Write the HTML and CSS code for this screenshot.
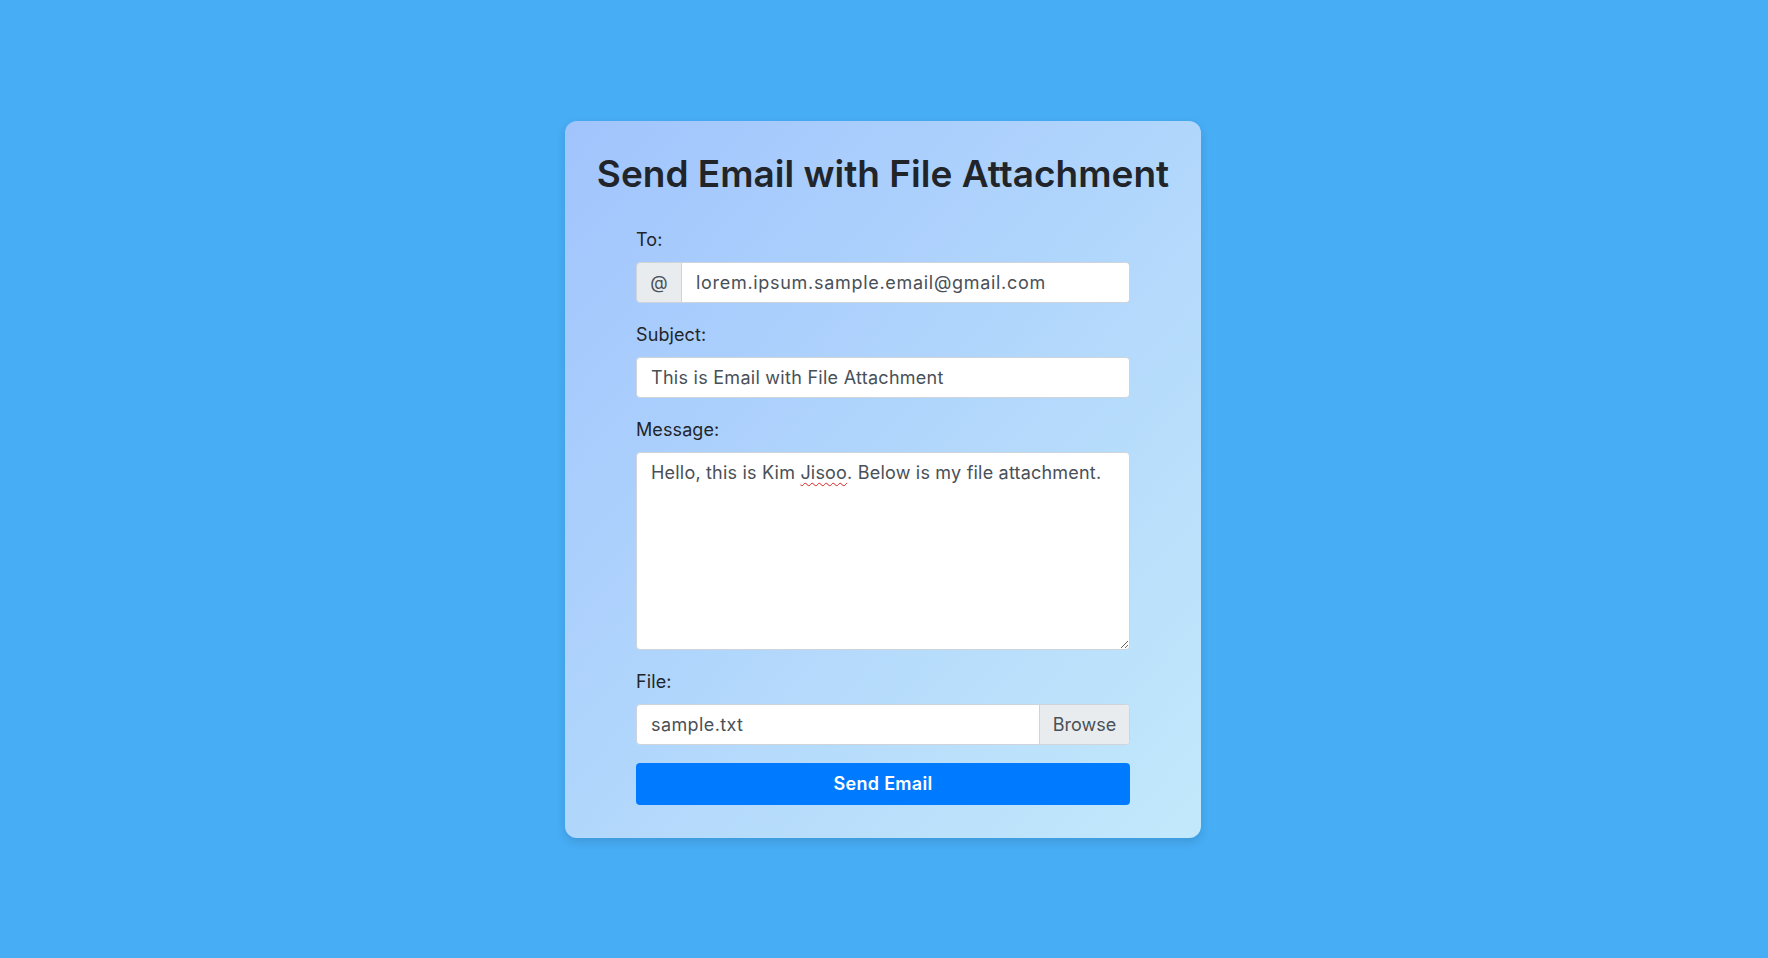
FILE: index.html
```html
<!DOCTYPE html>
<html lang="en">
<head>
<meta charset="utf-8">
<title>Send Email with File Attachment</title>
<link rel="stylesheet" href="styles.css">
</head>
<body>
<div class="card">
  <h2 class="title">Send Email with File Attachment</h2>
  <form class="form">
    <div class="group">
      <label class="label">To:</label>
      <div class="input-group">
        <span class="addon">@</span>
        <div class="control control-joined email">lorem.ipsum.sample.email@gmail.com</div>
      </div>
    </div>
    <div class="group">
      <label class="label">Subject:</label>
      <div class="control">This is Email with File Attachment</div>
    </div>
    <div class="group">
      <label class="label">Message:</label>
      <div class="textarea">Hello, this is Kim <span class="misspelled">Jisoo</span>. Below is my file attachment.</div>
    </div>
    <div class="group">
      <label class="label">File:</label>
      <div class="custom-file">
        <span class="file-name">sample.txt</span>
        <span class="browse">Browse</span>
      </div>
    </div>
    <button type="button" class="btn">Send Email</button>
  </form>
</div>
</body>
</html>
```
FILE: styles.css
```css
html, body {
  margin: 0;
  padding: 0;
}
body {
  min-height: 100vh;
  box-sizing: border-box;
  padding-right: 2px;
  background: #47adf5;
  display: flex;
  align-items: center;
  justify-content: center;
  font-family: "Inter", "Noto Sans", sans-serif;
  color: #212529;
}
.card {
  width: 636px;
  box-sizing: border-box;
  padding: 31px 0 33px;
  border-radius: 12px;
  background: linear-gradient(to bottom right, #a1c4fd, #c2e9fb);
  box-shadow: 0 4px 10px rgba(0, 0, 0, 0.12);
}
.title {
  margin: 0 0 31px;
  text-align: center;
  font-size: 37px;
  line-height: 43px;
  font-weight: 600;
  color: #212529;
}
.form {
  width: 494px;
  margin: 0 auto;
}
.group {
  margin-bottom: 18px;
}
.label {
  display: block;
  font-size: 18px;
  line-height: 27px;
  margin-bottom: 9px;
  color: #212529;
  letter-spacing: 0.1px;
}
.input-group {
  display: flex;
  height: 41px;
}
.addon {
  width: 46px;
  box-sizing: border-box;
  display: flex;
  align-items: center;
  justify-content: center;
  background: #e9ecef;
  border: 1px solid #ced4da;
  border-radius: 4px 0 0 4px;
  color: #495057;
  font-size: 18px;
}
.control {
  height: 41px;
  box-sizing: border-box;
  display: flex;
  align-items: center;
  padding: 0 14px;
  background: #fff;
  border: 1px solid #ced4da;
  border-radius: 4px;
  color: #495057;
  font-size: 18px;
  letter-spacing: 0.27px;
}
.control-joined {
  flex: 1;
  border-left: 0;
  border-radius: 0 4px 4px 0;
}
.email {
  letter-spacing: 0.7px;
}
.textarea {
  height: 198px;
  box-sizing: border-box;
  padding: 6px 14px;
  background: #fff;
  border: 1px solid #ced4da;
  border-radius: 4px;
  color: #495057;
  font-size: 18px;
  line-height: 27px;
  letter-spacing: 0.2px;
  resize: vertical;
  overflow: auto;
}
.misspelled {
  text-decoration: underline wavy #e02020;
  text-decoration-thickness: 1px;
  text-underline-offset: 3px;
}
.custom-file {
  display: flex;
  height: 41px;
  box-sizing: border-box;
  background: #fff;
  border: 1px solid #ced4da;
  border-radius: 4px;
  overflow: hidden;
  color: #495057;
  font-size: 18px;
}
.file-name {
  flex: 1;
  display: flex;
  align-items: center;
  padding: 0 14px;
  letter-spacing: 0.4px;
}
.browse {
  width: 89px;
  display: flex;
  align-items: center;
  justify-content: center;
  background: #e9ecef;
  border-left: 1px solid #ced4da;
}
.btn {
  display: block;
  width: 100%;
  height: 42px;
  border: 0;
  border-radius: 4px;
  background: #007bff;
  color: #fff;
  font-family: inherit;
  font-size: 18px;
  font-weight: 600;
  letter-spacing: 0.3px;
  cursor: pointer;
}
```
